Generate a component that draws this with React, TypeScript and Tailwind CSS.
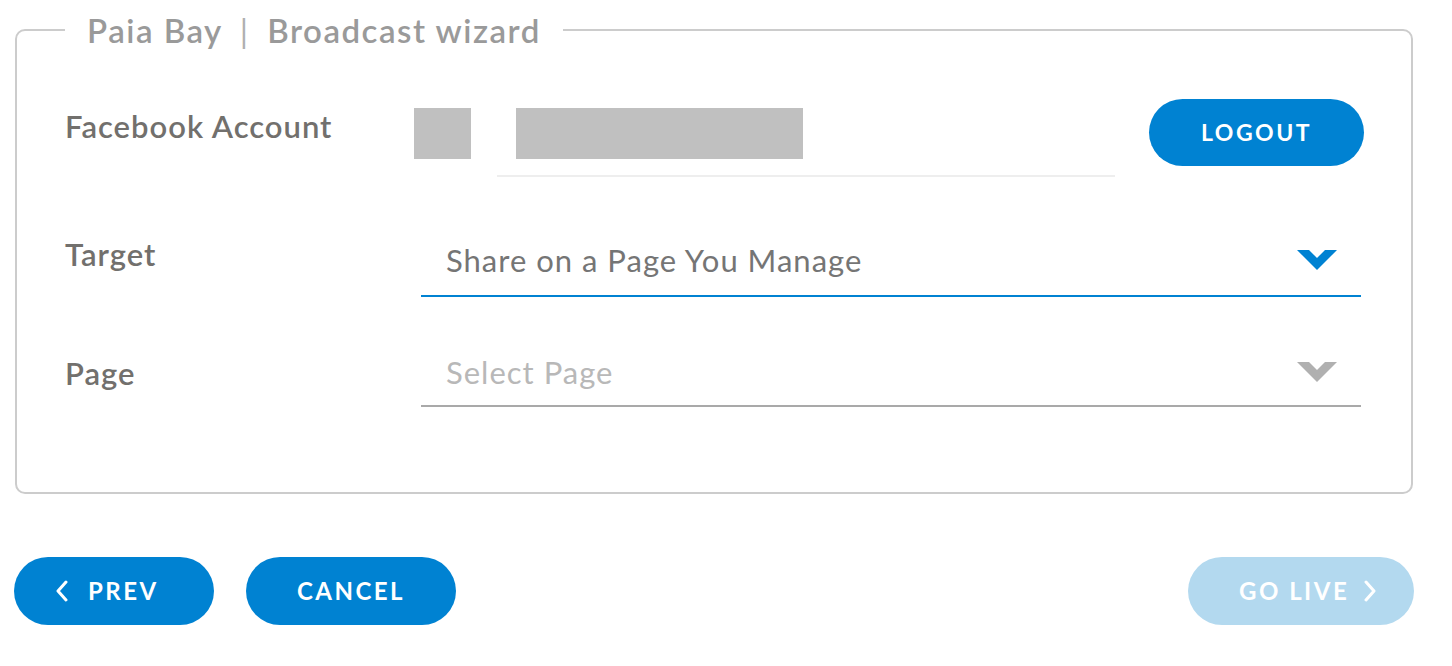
function Chevron({ color }: { color: string }) {
  return (
    <svg width="40" height="20" viewBox="0 0 40 20" className="shrink-0">
      <polygon points="0,0 12,0 20,8 28,0 40,0 20,20" fill={color} />
    </svg>
  );
}

function ArrowLeft() {
  return (
    <svg width="12" height="22" viewBox="0 0 12 22" className="shrink-0">
      <polyline points="10,2 2,11 10,20" fill="none" stroke="currentColor" strokeWidth="3" strokeLinecap="round" strokeLinejoin="round" />
    </svg>
  );
}

function ArrowRight() {
  return (
    <svg width="12" height="22" viewBox="0 0 12 22" className="shrink-0">
      <polyline points="2,2 10,11 2,20" fill="none" stroke="currentColor" strokeWidth="3" strokeLinecap="round" strokeLinejoin="round" />
    </svg>
  );
}

function SelectBox({
  value,
  placeholder,
  active
}: {
  value?: string;
  placeholder?: string;
  active?: boolean;
}) {
  return (
    <div
      className={`flex-1 flex items-center justify-between pl-[25px] pr-[24px] border-b-2 ${
        active ? 'h-[68px] pb-[4px] border-[#0082d2]' : 'h-[66px] pb-[2px] border-[#a9a9a9]'
      }`}
    >
      {value ? (
        <span className="text-[31px] tracking-[1px] text-[#757575]">{value}</span>
      ) : (
        <span className="text-[31px] tracking-[1px] text-[#b8b8b8]">{placeholder}</span>
      )}
      <Chevron color={active ? '#0082d2' : '#b0b0b0'} />
    </div>
  );
}

export default function App() {
  return (
    <div
      className="w-[1452px] h-[666px] bg-white pt-[11px] pl-[14px] pr-[38px]"
      style={{ fontFamily: 'Lato, "Open Sans", sans-serif' }}
    >
      <fieldset className="min-w-0 border-2 border-[#cccccc] rounded-[10px] pl-[48px] pr-[50px] pb-[85px] mx-px">
        <legend className="px-[22px] text-[33px] tracking-[1.5px] font-semibold text-[#9a9a9a] leading-[38px]">
          Paia Bay <span className="mx-[8px] font-normal text-[#b0b0b0]">|</span> Broadcast wizard
        </legend>

        {/* Facebook account */}
        <div className="flex items-start mt-[49px]">
          <div className="w-[349px] shrink-0 mt-[10px] text-[31px] tracking-[1px] font-semibold text-[#72706d] leading-[36px]">
            Facebook Account
          </div>
          <div className="w-[57px] h-[51px] shrink-0 bg-[#c0c0c0] mt-[10px]" />
          <div className="ml-[26px] w-[618px] shrink-0 mt-[10px] border-b-2 border-[#eeeeee] pb-[16px]">
            <div className="ml-[19px] w-[287px] h-[51px] bg-[#c0c0c0]" />
          </div>
          <button className="ml-[34px] mt-[1px] w-[215px] h-[67px] shrink-0 rounded-full bg-[#0082d2] text-white text-[23px] font-bold tracking-[2.5px]">
            LOGOUT
          </button>
        </div>

        {/* Target */}
        <div className="flex items-center mt-[52px]">
          <div className="w-[356px] shrink-0 -mt-[17px] text-[31px] tracking-[1px] font-semibold text-[#72706d]">Target</div>
          <SelectBox value="Share on a Page You Manage" active />
        </div>

        {/* Page */}
        <div className="flex items-center mt-[44px]">
          <div className="w-[356px] shrink-0 -mt-[2px] text-[31px] tracking-[1px] font-semibold text-[#72706d]">Page</div>
          <SelectBox placeholder="Select Page" />
        </div>
      </fieldset>

      <div className="flex items-center mt-[63px]">
        <button className="w-[200px] h-[68px] rounded-full bg-[#0082d2] text-white text-[24px] font-bold tracking-[2.5px] flex items-center pl-[42px] gap-[20px]">
          <ArrowLeft />
          PREV
        </button>
        <button className="ml-[32px] w-[210px] h-[68px] rounded-full bg-[#0082d2] text-white text-[24px] font-bold tracking-[2.5px]">
          CANCEL
        </button>
        <button className="ml-auto w-[226px] h-[68px] rounded-full bg-[#b3d9ef] text-white text-[24px] font-bold tracking-[2.5px] flex items-center pl-[51px] gap-[15px]">
          GO LIVE
          <ArrowRight />
        </button>
      </div>
    </div>
  );
}
